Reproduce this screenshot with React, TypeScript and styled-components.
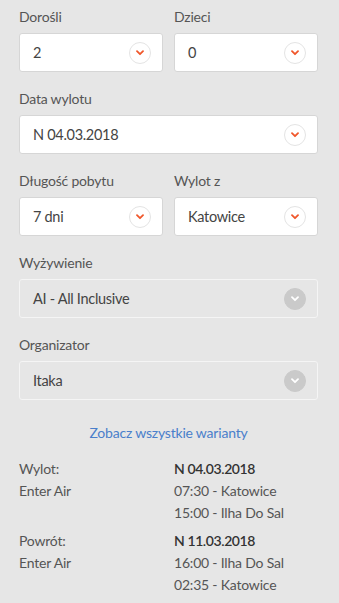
import React from 'react';
import styled, { createGlobalStyle } from 'styled-components';

const GlobalStyle = createGlobalStyle`
  body {
    margin: 0;
    background: #e6e6e6;
    font-family: Lato, "Open Sans", sans-serif;
    color: #444;
  }
`;

const Page = styled.div`
  width: 339px;
  min-height: 603px;
  box-sizing: border-box;
  padding: 7px 21px 0 19px;
  background: #e6e6e6;
`;

const Row = styled.div`
  display: grid;
  grid-template-columns: 1fr 1fr;
  gap: 11px;
`;

const Field = styled.div`
  margin-bottom: 17px;
`;

const Label = styled.div`
  font-size: 14px;
  line-height: 20px;
  color: #555;
  letter-spacing: -0.2px;
  margin-bottom: 6px;
`;

const Select = styled.div<{ $disabled?: boolean }>`
  height: 39px;
  box-sizing: border-box;
  display: flex;
  align-items: center;
  justify-content: space-between;
  padding: 0 11px 0 13px;
  border-radius: 3px;
  border: 1px solid ${p => (p.$disabled ? '#f5f5f5' : '#d6d6d6')};
  background: ${p => (p.$disabled ? '#e6e6e6' : '#fff')};
  font-size: 14.5px;
  letter-spacing: -0.3px;
  color: #444;
`;

const Chevron = styled.span<{ $disabled?: boolean }>`
  width: 22px;
  height: 22px;
  box-sizing: border-box;
  border-radius: 50%;
  display: flex;
  align-items: center;
  justify-content: center;
  border: 1px solid ${p => (p.$disabled ? '#cacaca' : '#e4e4e4')};
  background: ${p => (p.$disabled ? '#cacaca' : '#fff')};
  color: ${p => (p.$disabled ? '#fff' : '#f0572b')};
`;

// top margin collapses with the last field's bottom margin
const Link = styled.a`
  display: block;
  text-align: center;
  color: #4a7fcb;
  font-size: 14px;
  line-height: 20px;
  letter-spacing: -0.2px;
  margin: 23px 0 15px;
  text-decoration: none;
`;

const Flight = styled.div`
  display: grid;
  grid-template-columns: 1fr 1fr;
  gap: 0 11px;
  font-size: 14px;
  line-height: 22px;
  letter-spacing: -0.2px;
  color: #555;
  margin-bottom: 6px;
`;

const Strong = styled.div`
  color: #333;
  font-weight: 600;
  letter-spacing: -0.4px;
`;

const Arrow: React.FC<{ disabled?: boolean }> = ({ disabled }) => (
  <Chevron $disabled={disabled}>
    <svg width="8" height="6" viewBox="0 0 8 6">
      <path d="M1 1.2 L4 4.2 L7 1.2" fill="none" stroke="currentColor" strokeWidth="1.8" strokeLinecap="round" strokeLinejoin="round" />
    </svg>
  </Chevron>
);

const Dropdown: React.FC<{ label: string; value: string; disabled?: boolean }> = ({ label, value, disabled }) => (
  <Field>
    <Label>{label}</Label>
    <Select $disabled={disabled}>
      <span>{value}</span>
      <Arrow disabled={disabled} />
    </Select>
  </Field>
);

const App: React.FC = () => (
  <Page>
    <GlobalStyle />
    <Row>
      <Dropdown label="Dorośli" value="2" />
      <Dropdown label="Dzieci" value="0" />
    </Row>
    <Dropdown label="Data wylotu" value="N 04.03.2018" />
    <Row>
      <Dropdown label="Długość pobytu" value="7 dni" />
      <Dropdown label="Wylot z" value="Katowice" />
    </Row>
    <Dropdown label="Wyżywienie" value="AI - All Inclusive" disabled />
    <Dropdown label="Organizator" value="Itaka" disabled />
    <Link href="#">Zobacz wszystkie warianty</Link>
    <Flight>
      <div>Wylot:</div>
      <Strong>N 04.03.2018</Strong>
      <div>Enter Air</div>
      <div>07:30 - Katowice</div>
      <div />
      <div>15:00 - Ilha Do Sal</div>
    </Flight>
    <Flight>
      <div>Powrót:</div>
      <Strong>N 11.03.2018</Strong>
      <div>Enter Air</div>
      <div>16:00 - Ilha Do Sal</div>
      <div />
      <div>02:35 - Katowice</div>
    </Flight>
  </Page>
);

export default App;
